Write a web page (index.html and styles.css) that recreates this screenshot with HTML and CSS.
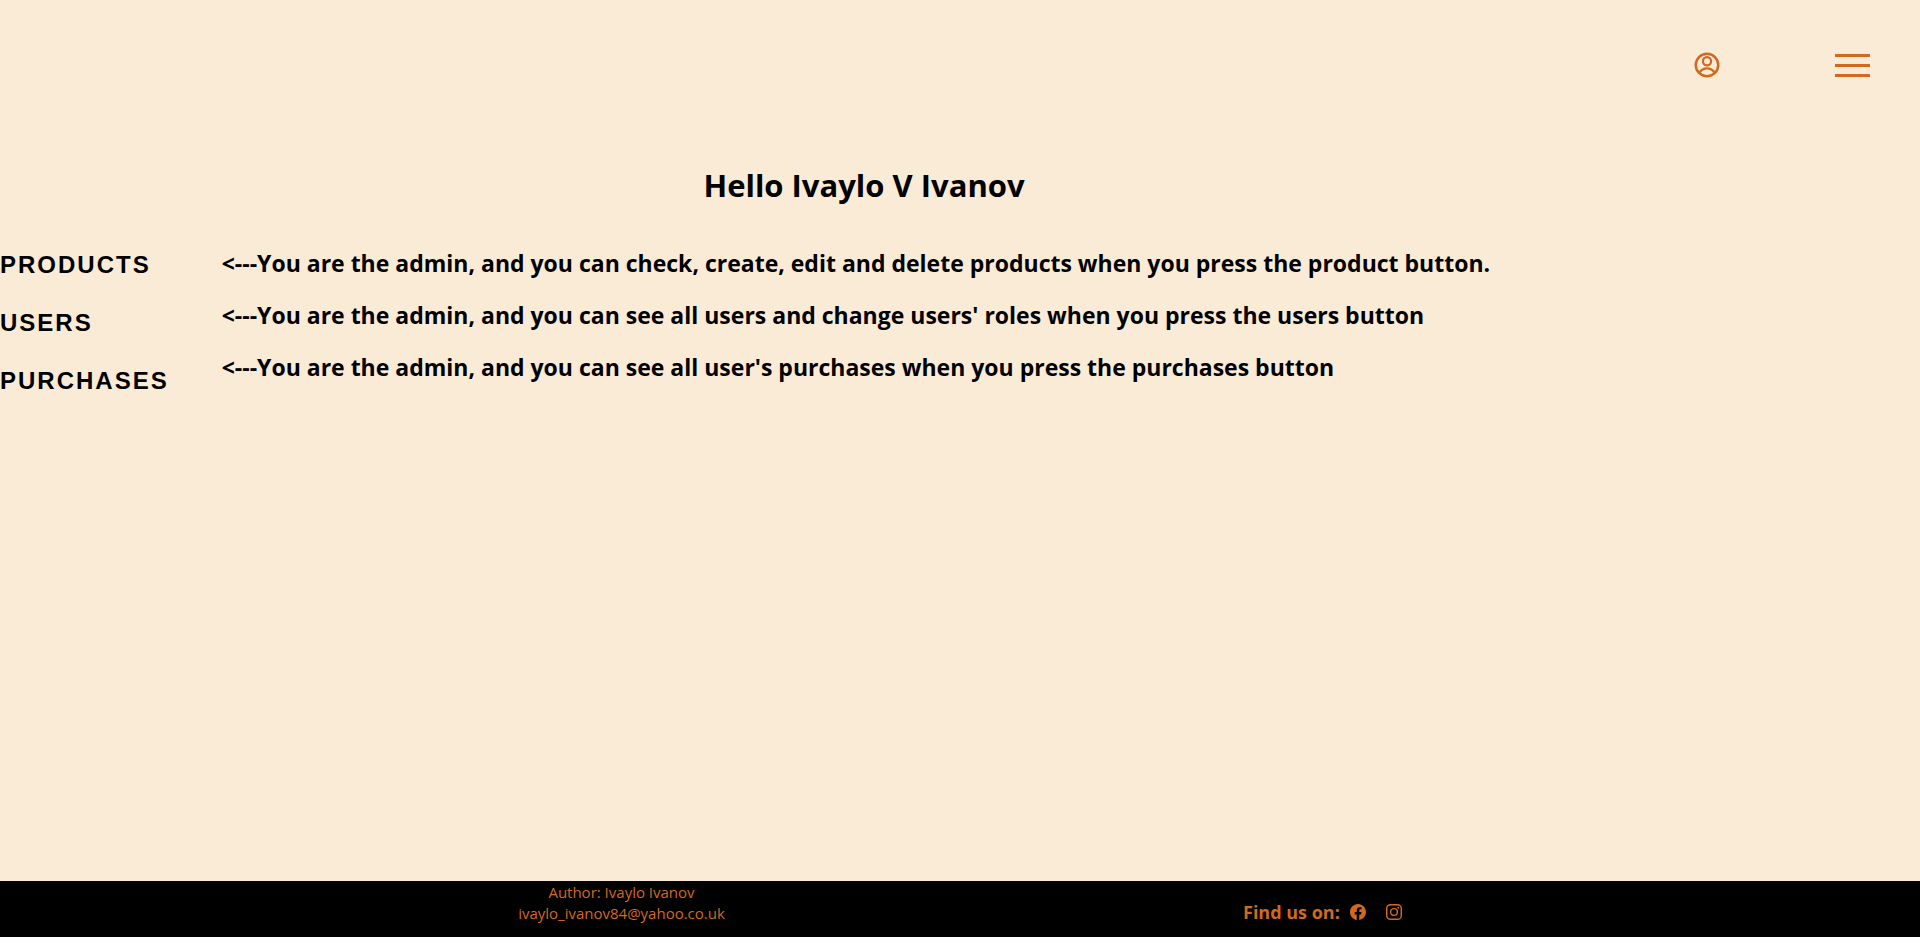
FILE: index.html
```html
<!DOCTYPE html>
<html lang="en">
<head>
<meta charset="utf-8">
<meta name="viewport" content="width=device-width, initial-scale=1">
<title>Admin profile</title>
<link rel="stylesheet" href="styles.css">
</head>
<body>
<div class="page">
<header class="topbar">
  <a class="account" href="#profile" aria-label="Profile">
    <svg viewBox="0 0 30 30" width="30" height="30" fill="none" stroke="currentColor" stroke-width="2.500" aria-hidden="true"><circle cx="15" cy="15" r="11.250"/><circle cx="15" cy="11.200" r="4.100" stroke-width="2.200"/><path d="M7.200 22.800C9.200 19.700 12 18.300 15 18.300s5.800 1.400 7.800 4.500" stroke-width="2.300"/></svg>
  </a>
  <button class="menu" type="button" aria-label="Menu"><span class="menu-line"></span><span class="menu-line"></span><span class="menu-line"></span></button>
</header>
<main class="profile">
  <h1 class="greeting">Hello Ivaylo V Ivanov</h1>
  <div class="admin">
    <nav class="admin-nav">
      <button class="admin-button" type="button">PRODUCTS</button>
      <button class="admin-button" type="button">USERS</button>
      <button class="admin-button" type="button">PURCHASES</button>
    </nav>
    <section class="hints">
      <h2 class="hint">&lt;---You are the admin, and you can check, create, edit and delete products when you press the product button.</h2>
      <h2 class="hint">&lt;---You are the admin, and you can see all users and change users' roles when you press the users button</h2>
      <h2 class="hint">&lt;---You are the admin, and you can see all user's purchases when you press the purchases button</h2>
    </section>
  </div>
</main>
<footer class="footer">
  <div class="author">
    <p class="author-line">Author: Ivaylo Ivanov</p>
    <a class="author-line" href="mailto:ivaylo_ivanov84@yahoo.co.uk">ivaylo_ivanov84@yahoo.co.uk</a>
  </div>
  <div class="social">
    <p class="social-title">Find us on:</p>
    <a class="social-link" href="#facebook" aria-label="Facebook"><svg viewBox="0 0 16 16" width="16" height="16" fill="currentColor" aria-hidden="true"><path d="M16 8.049c0-4.446-3.582-8.050-8-8.050C3.580 0-.002 3.603-.002 8.050c0 4.017 2.926 7.347 6.750 7.951v-5.625h-2.030V8.050H6.750V6.275c0-2.017 1.195-3.131 3.022-3.131.876 0 1.791.157 1.791.157v1.980h-1.009c-.993 0-1.303.621-1.303 1.258v1.510h2.218l-.354 2.326H9.250V16c3.824-.604 6.750-3.934 6.750-7.951z"/></svg></a>
    <a class="social-link" href="#instagram" aria-label="Instagram"><svg viewBox="0 0 16 16" width="16" height="16" fill="none" stroke="currentColor" aria-hidden="true"><rect x=".72" y=".72" width="14.560" height="14.560" rx="3.900" stroke-width="1.440"/><circle cx="8" cy="8" r="3.390" stroke-width="1.440"/><circle cx="12.270" cy="3.730" r=".96" fill="currentColor" stroke="none"/></svg></a>
  </div>
</footer>
</div>
</body>
</html>
```
FILE: styles.css
```css
* { box-sizing: border-box; }
body {
  margin: 0;
  min-height: 100vh;
  display: flex;
  flex-direction: column;
  padding-bottom: 6px;
  background: #fff;
  color: #000;
  font-family: "Segoe UI", "Open Sans", "Noto Sans", sans-serif;
  font-size: 16px;
}
.page {
  flex: 1;
  display: flex;
  flex-direction: column;
  background: #faebd7;
}
.topbar {
  display: flex;
  justify-content: flex-end;
  align-items: center;
  gap: 113px;
  height: 130px;
  padding: 0 50px;
  color: #d2691e;
}
.account { display: flex; color: inherit; }
.menu {
  display: flex;
  flex-direction: column;
  gap: 7px;
  padding: 0;
  border: 0;
  background: none;
  color: inherit;
  cursor: pointer;
}
.menu-line { width: 35px; height: 3px; background: currentColor; }
.profile {
  flex: 1;
  width: 90%;
  padding-top: 33px;
}
.greeting {
  margin: 0 0 40px;
  font-size: 31px;
  line-height: 44px;
  font-weight: 700;
  text-align: center;
}
.admin {
  display: flex;
  align-items: flex-start;
  gap: 53px;
}
.admin-nav {
  display: flex;
  flex-direction: column;
  align-items: flex-start;
  gap: 30px;
  padding-top: 4px;
}
.admin-button {
  padding: 0;
  border: 0;
  background: none;
  color: inherit;
  font: bold 24px/28px "Liberation Sans", Arial, sans-serif;
  letter-spacing: 2px;
  cursor: pointer;
}
.hint {
  margin: 0 0 20px;
  font-size: 23px;
  line-height: 32px;
  font-weight: 700;
}
.footer {
  display: flex;
  justify-content: space-evenly;
  height: 56px;
  background: #000;
  color: #d2691e;
}
.author { display: flex; flex-direction: column; align-items: center; padding-top: 1px; }
.author-line {
  margin: 0;
  font-size: 15px;
  line-height: 21px;
  color: inherit;
  text-decoration: none;
}
.social { display: flex; align-items: center; gap: 20px; padding-top: 5px; }
.social-title { margin: 0 -10px 0 0; font-size: 18px; line-height: 24px; font-weight: 700; }
.social-link { display: flex; color: inherit; }
```
